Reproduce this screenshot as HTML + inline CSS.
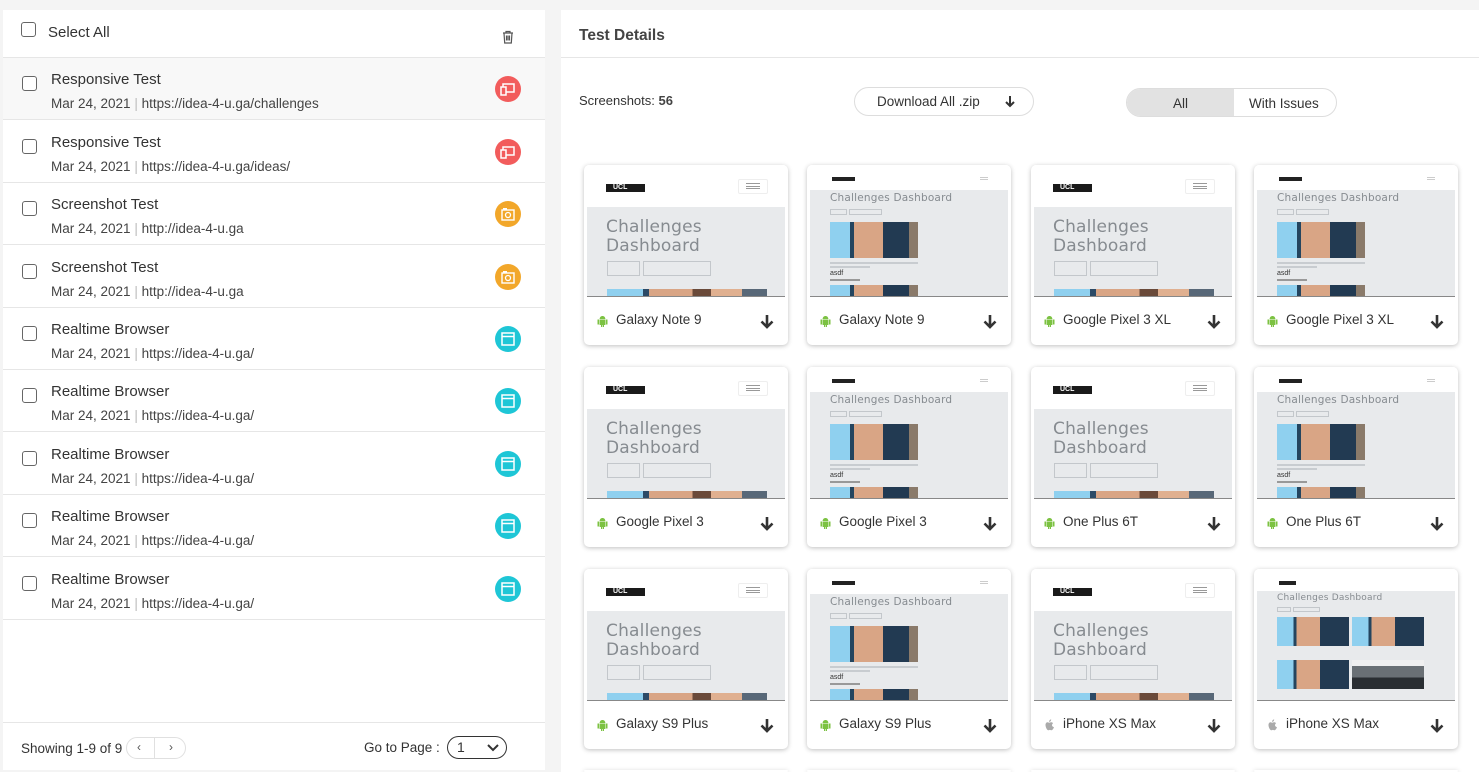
<!DOCTYPE html>
<html style="overflow:hidden;height:772px"><head><meta charset="utf-8"><style>
*{box-sizing:border-box;margin:0;padding:0}
html,body{overflow:hidden}
body{width:1479px;height:772px;background:#f4f4f4;font-family:"Liberation Sans",sans-serif;color:#333;position:relative}
#wrap{position:absolute;left:0;top:0;width:1479px;height:772px;overflow:hidden}
.lp{position:absolute;left:3px;top:10px;width:542px;height:760px;background:#fff}
.rp{position:absolute;left:561px;top:10px;width:918px;height:762px;background:#fff}
.hdr{position:absolute;left:0;top:0;width:542px;height:48px;border-bottom:1px solid #e6e6e6}
.cb{position:absolute;width:15px;height:15px;border:1.5px solid #666;border-radius:3px;background:#fff}
.row{position:absolute;left:0;width:542px;height:62px;border-bottom:1px solid #e6e6e6}
.row .t{position:absolute;left:48px;top:13px;font-size:15px;color:#333}
.row .s{position:absolute;left:48px;top:38px;font-size:13.5px;color:#444}
.row .s b{font-weight:normal;color:#bbb}
.ic{position:absolute;left:492px;top:18px;width:26px;height:26px;border-radius:50%}
.card{position:absolute;width:204px;height:180px;background:#fff;border-radius:5px;box-shadow:0 1px 5px rgba(0,0,0,.25);overflow:hidden}
.th{position:absolute;left:3px;top:0;width:198px;height:132px;background:#fff;border-bottom:1px solid #888;overflow:hidden}
.g{position:absolute;left:0;right:0;background:#e8eaec}
.lbl{position:absolute;left:32px;top:147px;font-size:13.5px;color:#333}
.and{position:absolute;left:12px;top:150px;width:13px;height:12px}
.dl{position:absolute;left:176px;top:149px;width:14px;height:16px}
.ct{position:absolute;font-family:"DejaVu Sans",sans-serif;color:#868b90;letter-spacing:.2px}
.bx{position:absolute;border:1px solid #c3c7cb}
</style></head><body><div id="wrap">
<div class="lp">
 <div class="hdr">
  <div class="cb" style="left:18px;top:12px"></div>
  <div style="position:absolute;left:45px;top:14px;font-size:15px">Select All</div>
  <svg style="position:absolute;left:499px;top:20px" width="12" height="14" viewBox="0 0 12 14"><path d="M1 3h10M4 3V1.5h4V3M2 3l.7 10h6.6L10 3M4.5 5.5v5M6 5.5v5M7.5 5.5v5" fill="none" stroke="#555" stroke-width="1.2"/></svg>
 </div>
 <div class="row" style="top:48px;background:#f8f8f8"><div class="cb" style="left:19px;top:18px"></div><div class="t">Responsive Test</div><div class="s">Mar 24, 2021 <b>|</b> https://idea-4-u.ga/challenges</div><div class="ic" style="background:#f25c5c"><svg width="26" height="26"><rect x="8" y="8" width="11" height="8" fill="none" stroke="#fff" stroke-width="1.5"/><rect x="6" y="11" width="5" height="8" fill="#f25c5c" stroke="#fff" stroke-width="1.5"/></svg></div></div>
 <div class="row" style="top:111px"><div class="cb" style="left:19px;top:18px"></div><div class="t">Responsive Test</div><div class="s">Mar 24, 2021 <b>|</b> https://idea-4-u.ga/ideas/</div><div class="ic" style="background:#f25c5c"><svg width="26" height="26"><rect x="8" y="8" width="11" height="8" fill="none" stroke="#fff" stroke-width="1.5"/><rect x="6" y="11" width="5" height="8" fill="#f25c5c" stroke="#fff" stroke-width="1.5"/></svg></div></div>
 <div class="row" style="top:173px"><div class="cb" style="left:19px;top:18px"></div><div class="t">Screenshot Test</div><div class="s">Mar 24, 2021 <b>|</b> http://idea-4-u.ga</div><div class="ic" style="background:#f2a72a"><svg width="26" height="26"><rect x="7" y="9" width="12" height="10" fill="none" stroke="#fff" stroke-width="1.4"/><rect x="8" y="7" width="4" height="2" fill="#fff"/><circle cx="13" cy="14" r="2.5" fill="none" stroke="#fff" stroke-width="1.3"/></svg></div></div>
 <div class="row" style="top:236px"><div class="cb" style="left:19px;top:18px"></div><div class="t">Screenshot Test</div><div class="s">Mar 24, 2021 <b>|</b> http://idea-4-u.ga</div><div class="ic" style="background:#f2a72a"><svg width="26" height="26"><rect x="7" y="9" width="12" height="10" fill="none" stroke="#fff" stroke-width="1.4"/><rect x="8" y="7" width="4" height="2" fill="#fff"/><circle cx="13" cy="14" r="2.5" fill="none" stroke="#fff" stroke-width="1.3"/></svg></div></div>
 <div class="row" style="top:298px"><div class="cb" style="left:19px;top:18px"></div><div class="t">Realtime Browser</div><div class="s">Mar 24, 2021 <b>|</b> https://idea-4-u.ga/</div><div class="ic" style="background:#1ec6d6"><svg width="26" height="26"><rect x="7" y="7" width="12" height="12" fill="none" stroke="#fff" stroke-width="1.5"/><line x1="7" y1="10.5" x2="19" y2="10.5" stroke="#fff" stroke-width="1.5"/></svg></div></div>
 <div class="row" style="top:360px"><div class="cb" style="left:19px;top:18px"></div><div class="t">Realtime Browser</div><div class="s">Mar 24, 2021 <b>|</b> https://idea-4-u.ga/</div><div class="ic" style="background:#1ec6d6"><svg width="26" height="26"><rect x="7" y="7" width="12" height="12" fill="none" stroke="#fff" stroke-width="1.5"/><line x1="7" y1="10.5" x2="19" y2="10.5" stroke="#fff" stroke-width="1.5"/></svg></div></div>
 <div class="row" style="top:423px"><div class="cb" style="left:19px;top:18px"></div><div class="t">Realtime Browser</div><div class="s">Mar 24, 2021 <b>|</b> https://idea-4-u.ga/</div><div class="ic" style="background:#1ec6d6"><svg width="26" height="26"><rect x="7" y="7" width="12" height="12" fill="none" stroke="#fff" stroke-width="1.5"/><line x1="7" y1="10.5" x2="19" y2="10.5" stroke="#fff" stroke-width="1.5"/></svg></div></div>
 <div class="row" style="top:485px"><div class="cb" style="left:19px;top:18px"></div><div class="t">Realtime Browser</div><div class="s">Mar 24, 2021 <b>|</b> https://idea-4-u.ga/</div><div class="ic" style="background:#1ec6d6"><svg width="26" height="26"><rect x="7" y="7" width="12" height="12" fill="none" stroke="#fff" stroke-width="1.5"/><line x1="7" y1="10.5" x2="19" y2="10.5" stroke="#fff" stroke-width="1.5"/></svg></div></div>
 <div class="row" style="top:548px"><div class="cb" style="left:19px;top:18px"></div><div class="t">Realtime Browser</div><div class="s">Mar 24, 2021 <b>|</b> https://idea-4-u.ga/</div><div class="ic" style="background:#1ec6d6"><svg width="26" height="26"><rect x="7" y="7" width="12" height="12" fill="none" stroke="#fff" stroke-width="1.5"/><line x1="7" y1="10.5" x2="19" y2="10.5" stroke="#fff" stroke-width="1.5"/></svg></div></div>
 <div style="position:absolute;left:0;top:712px;width:542px;border-top:1px solid #e6e6e6"></div>
 <div style="position:absolute;left:18px;top:731px;font-size:13.5px">Showing 1-9 of 9</div>
 <div style="position:absolute;left:123px;top:727px;width:60px;height:22px;border:1px solid #e0e0e0;border-radius:11px"><div style="position:absolute;left:27px;top:0;width:1px;height:20px;background:#e0e0e0"></div><span style="position:absolute;left:10px;top:2px;font-size:12px;color:#555">‹</span><span style="position:absolute;left:42px;top:2px;font-size:12px;color:#555">›</span></div>
 <div style="position:absolute;left:361px;top:730px;font-size:13.5px">Go to Page :</div>
 <div style="position:absolute;left:444px;top:726px;width:60px;height:23px;border:1.3px solid #333;border-radius:12px"><span style="position:absolute;left:9px;top:2px;font-size:14px">1</span><svg style="position:absolute;left:39px;top:7px" width="12" height="8"><path d="M1 1l5 5 5-5" fill="none" stroke="#333" stroke-width="2"/></svg></div>
</div>

<div class="rp">
 <div style="position:absolute;left:18px;top:17px;font-size:15.5px;font-weight:bold;color:#444">Test Details</div>
 <div style="position:absolute;left:0;top:47px;width:918px;border-top:1px solid #e6e6e6"></div>
 <div style="position:absolute;left:18px;top:83px;font-size:13px">Screenshots: <b style="color:#444">56</b></div>
 <div style="position:absolute;left:293px;top:77px;width:180px;height:29px;border:1px solid #ddd;border-radius:15px;font-size:13.5px"><span style="position:absolute;left:22px;top:6px">Download All .zip</span><svg style="position:absolute;left:150px;top:8px" width="10" height="12"><path d="M5 0v10M1 6l4 4 4-4" fill="none" stroke="#333" stroke-width="2"/></svg></div>
 <div style="position:absolute;left:565px;top:78px;width:211px;height:29px;border:1px solid #ddd;border-radius:15px;overflow:hidden;font-size:13.5px"><div style="position:absolute;left:0;top:0;width:107px;height:29px;background:#e2e2e2"></div><span style="position:absolute;left:46px;top:7px">All</span><span style="position:absolute;left:122px;top:7px">With Issues</span></div>
</div>

<div id="cards"></div>
</div>
<script>
var A='<div class="th"><div style="position:absolute;left:19px;top:19px;width:39px;height:8px;background:#1a1a1a"></div><div style="position:absolute;left:26px;top:19px;font:bold 7px Liberation Sans;color:#fff">UCL</div><div style="position:absolute;left:151px;top:14px;width:30px;height:15px;border:1px solid #eee;border-radius:2px"></div><div style="position:absolute;left:159px;top:18px;width:14px;height:6px;border-top:1px solid #999;border-bottom:1px solid #999"></div><div style="position:absolute;left:159px;top:21px;width:14px;border-top:1px solid #999"></div><div class="g" style="top:42px;bottom:0"><div class="ct" style="left:19px;top:11px;font-size:17px;line-height:19px">Challenges<br>Dashboard</div><div class="bx" style="left:20px;top:54px;width:33px;height:15px"></div><div class="bx" style="left:56px;top:54px;width:68px;height:15px"></div><div style="position:absolute;left:20px;top:82px;width:36px;height:8px;background:#8fd0ef"></div><div style="position:absolute;left:56px;top:82px;width:124px;height:8px;background:linear-gradient(90deg,#2c4a66 0 5%,#d9a585 5% 40%,#6a4a3a 40% 55%,#e0b090 55% 80%,#586878 80%)"></div></div></div>';
var B='<div class="th"><div style="position:absolute;left:22px;top:12px;width:23px;height:4px;background:#222"></div><div style="position:absolute;left:170px;top:12px;width:8px;height:3px;border-top:1px solid #ccc;border-bottom:1px solid #ccc"></div><div class="g" style="top:25px;bottom:0"><div class="ct" style="left:20px;top:2px;font-size:10.5px">Challenges Dashboard</div><div class="bx" style="left:20px;top:19px;width:17px;height:6px"></div><div class="bx" style="left:39px;top:19px;width:33px;height:6px"></div><div style="position:absolute;left:20px;top:32px;width:88px;height:36px;background:linear-gradient(90deg,#8fd0ef 0 23%,#24455f 23% 27%,#d9a585 27% 60%,#223a52 60% 90%,#8a7a6a 90%)"></div><div style="position:absolute;left:20px;top:72px;width:88px;height:2px;background:#c8ccd0"></div><div style="position:absolute;left:20px;top:76px;width:40px;height:2px;background:#c8ccd0"></div><div style="position:absolute;left:20px;top:80px;font-size:7px;color:#333">asdf</div><div style="position:absolute;left:20px;top:89px;width:30px;height:2px;background:#999"></div><div style="position:absolute;left:20px;top:95px;width:88px;height:20px;background:linear-gradient(90deg,#8fd0ef 0 23%,#24455f 23% 27%,#d9a585 27% 60%,#223a52 60% 90%,#8a7a6a 90%)"></div></div></div>';
var C='<div class="th"><div style="position:absolute;left:22px;top:12px;width:17px;height:4px;background:#222"></div><div class="g" style="top:22px;bottom:0"><div class="ct" style="left:20px;top:2px;font-size:9px">Challenges Dashboard</div><div class="bx" style="left:20px;top:16px;width:14px;height:5px"></div><div class="bx" style="left:36px;top:16px;width:27px;height:5px"></div><div style="position:absolute;left:20px;top:26px;width:72px;height:29px;background:linear-gradient(90deg,#8fd0ef 0 23%,#24455f 23% 27%,#d9a585 27% 60%,#223a52 60%)"></div><div style="position:absolute;left:95px;top:26px;width:72px;height:29px;background:linear-gradient(90deg,#8fd0ef 0 23%,#24455f 23% 27%,#d9a585 27% 60%,#223a52 60%)"></div><div style="position:absolute;left:20px;top:69px;width:72px;height:29px;background:linear-gradient(90deg,#8fd0ef 0 23%,#24455f 23% 27%,#d9a585 27% 60%,#223a52 60%)"></div><div style="position:absolute;left:95px;top:69px;width:72px;height:29px;background:linear-gradient(180deg,#f0f0f0 0 20%,#6a7075 20% 60%,#2a2e32 60%)"></div></div></div>';
var AND='<svg class="and" viewBox="0 0 13 12"><path d="M1.5 4.5h1.6v5h-1.6zM9.9 4.5h1.6v5H9.9zM3.6 4.5h5.8v5.5H8v2H6.8v-2H6.2v2H5v-2H3.6zM3.6 4C3.8 2 5 1 6.5 1S9.2 2 9.4 4z" fill="#7cc242"/></svg>';
var APL='<svg class="and" viewBox="0 0 13 12"><path d="M9 6.3c0-1.3 1-1.9 1.1-2-0.6-.9-1.5-1-1.9-1-.8-.1-1.600.5-2 .5s-1-.5-1.7-.5C3.6 3.3 2.5 4.3 2.5 6c0 2.3 1.6 5.3 2.8 5.3.6 0 .9-.4 1.6-.4s.9.4 1.6.4c1.1 0 2.3-2.3 2.5-3-.1 0-2-.8-2-2zM7.6 2.1c.4-.5.6-1.1.6-1.7-.6 0-1.2.4-1.6.8-.3.4-.6 1-.5 1.6.6.1 1.2-.3 1.5-.7z" fill="#aaa"/></svg>';
var DL='<svg class="dl" viewBox="0 0 14 16"><path d="M7 1v12M1.5 7.5L7 13l5.5-5.5" fill="none" stroke="#333" stroke-width="2.6"/></svg>';
var xs=[584,807,1031,1254],ys=[165,367,569,771];
var data=[[A,'Galaxy Note 9',AND],[B,'Galaxy Note 9',AND],[A,'Google Pixel 3 XL',AND],[B,'Google Pixel 3 XL',AND],
[A,'Google Pixel 3',AND],[B,'Google Pixel 3',AND],[A,'One Plus 6T',AND],[B,'One Plus 6T',AND],
[A,'Galaxy S9 Plus',AND],[B,'Galaxy S9 Plus',AND],[A,'iPhone XS Max',APL],[C,'iPhone XS Max',APL]];
var h='';
for(var i=0;i<12;i++){var d=data[i];h+='<div class="card" style="left:'+xs[i%4]+'px;top:'+ys[Math.floor(i/4)]+'px">'+d[0]+d[2]+'<div class="lbl">'+d[1]+'</div>'+DL+'</div>';}
for(var j=0;j<4;j++){h+='<div class="card" style="left:'+xs[j]+'px;top:770px;height:2px"></div>';}
document.getElementById('cards').innerHTML=h;
</script>
</body></html>
